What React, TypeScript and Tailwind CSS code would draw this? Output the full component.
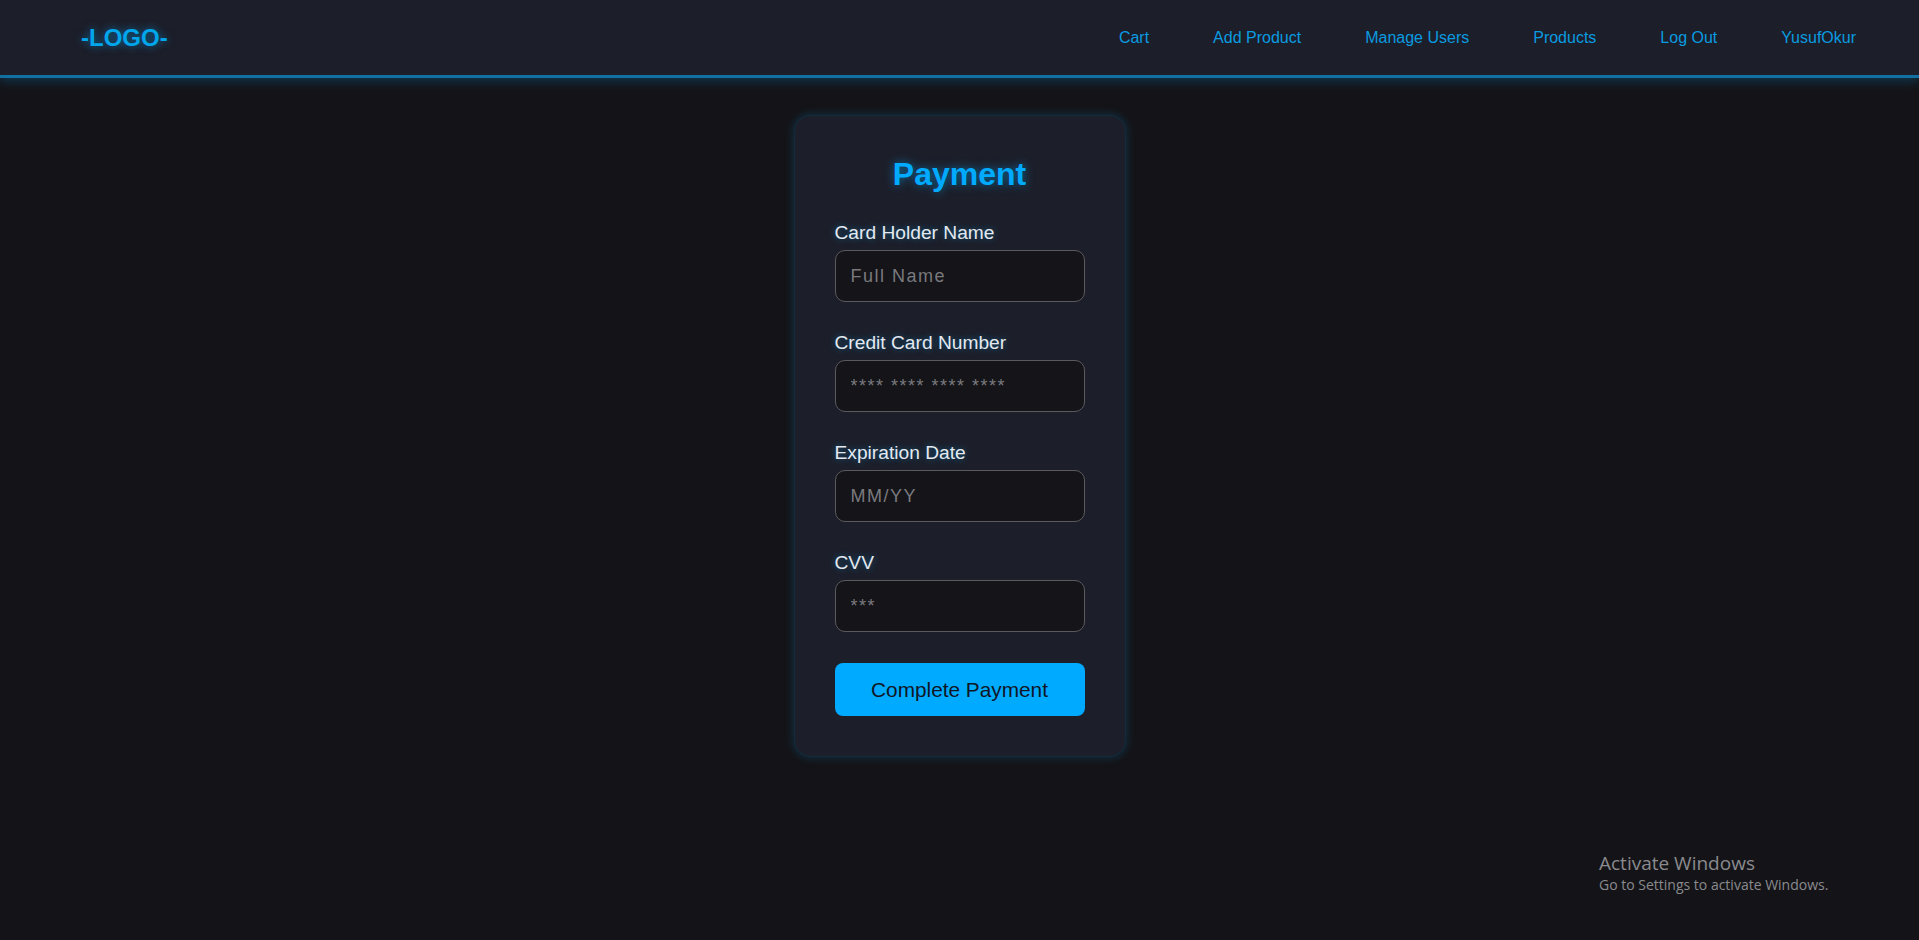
import React from "react"

const links = ["Cart", "Add Product", "Manage Users", "Products", "Log Out", "YusufOkur"]

const fields = [
  { label: "Card Holder Name", placeholder: "Full Name" },
  { label: "Credit Card Number", placeholder: "**** **** **** ****" },
  { label: "Expiration Date", placeholder: "MM/YY" },
  { label: "CVV", placeholder: "***" },
]

function Navbar() {
  return (
    <header className="flex h-[78px] items-center justify-between border-b-[3px] border-[#11709f] bg-[#1c1e29] pl-[81px] pr-[63px] shadow-[0_3px_10px_rgba(0,140,210,0.3)]">
      <div className="text-[24px] font-bold text-[#00a6ec] [text-shadow:0_0_8px_rgba(0,170,255,0.6)]">
        -LOGO-
      </div>
      <nav className="flex items-center gap-[64px] text-[16px] text-[#0a9be0]">
        {links.map((l) => (
          <a key={l} href="#" className="leading-[18px]">
            {l}
          </a>
        ))}
      </nav>
    </header>
  )
}

function PaymentCard() {
  return (
    <div className="w-[332px] rounded-[16px] border border-[#122c3e] bg-[#1c1f2a] px-[40px] pb-[40px] pt-[40px] shadow-[0_0_10px_rgba(0,150,230,0.25)]">
      <h2 className="mb-[29px] text-center text-[32px] font-bold leading-[37px] text-[#00aaff] [text-shadow:0_0_10px_rgba(0,170,255,0.55)]">
        Payment
      </h2>
      {fields.map((f) => (
        <div key={f.label} className="mb-[30px]">
          <label className="mb-[6px] block text-[19.2px] leading-[22px] text-[#e4e9f0] [text-shadow:0_0_6px_rgba(0,170,255,0.45)]">
            {f.label}
          </label>
          <input
            type="text"
            placeholder={f.placeholder}
            className="block h-[52px] w-full rounded-[10px] border border-[#5a5a5e] bg-[#141419] px-[15px] text-[18px] tracking-[1.5px] text-white outline-none placeholder:text-[#7a7a7e]"
          />
        </div>
      ))}
      <button className="mt-[1px] h-[53px] w-full rounded-[8px] bg-[#00aaff] text-[20.8px] text-[#101624]">
        Complete Payment
      </button>
    </div>
  )
}

export default function App() {
  return (
    <div className="relative min-h-[940px] bg-[#141418] font-['Liberation_Sans',Arial,sans-serif]">
      <Navbar />
      <main className="flex justify-center pt-[37px]">
        <PaymentCard />
      </main>
      <div className="absolute left-[1599px] top-[851px] font-['Open_Sans',sans-serif] text-[#8a8a8e]">
        <div className="text-[19px] leading-[24px]">Activate Windows</div>
        <div className="text-[14px] leading-[20px]">Go to Settings to activate Windows.</div>
      </div>
    </div>
  )
}
